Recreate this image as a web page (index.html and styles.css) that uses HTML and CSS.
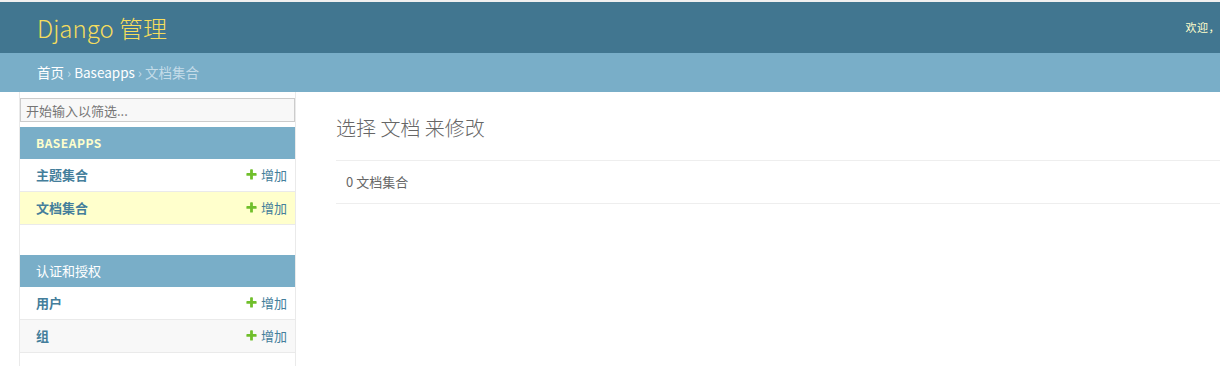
FILE: index.html
```html
<!DOCTYPE html>
<html lang="zh-hans">
<head>
    <meta charset="UTF-8">
    <meta name="viewport" content="width=device-width, initial-scale=1.0">
    <title>选择 文档 来修改 | Django 站点管理员</title>
    <link rel="stylesheet" href="styles.css">
</head>
<body>
    <div id="header">
        <div id="branding">
            <h1 id="site-name"><a href="#">Django 管理</a></h1>
        </div>
        <div id="user-tools">欢迎，</div>
    </div>

    <div class="breadcrumbs">
        <a href="#">首页</a> › <a href="#">Baseapps</a> › 文档集合
    </div>

    <div class="main">
        <button class="toggle-nav-sidebar" aria-label="切换导航"></button>

        <nav id="nav-sidebar">
            <input type="search" id="nav-filter" placeholder="开始输入以筛选...">

            <div class="module current-app">
                <table>
                    <caption><a href="#" class="section">Baseapps</a></caption>
                    <tr>
                        <th><a href="#">主题集合</a></th>
                        <td><a href="#" class="addlink"><svg viewBox="0 0 1792 1792"><path fill="#70bf2b" d="M1600 796v192q0 40-28 68t-68 28h-416v416q0 40-28 68t-68 28h-192q-40 0-68-28t-28-68v-416h-416q-40 0-68-28t-28-68v-192q0-40 28-68t68-28h416v-416q0-40 28-68t68-28h192q40 0 68 28t28 68v416h416q40 0 68 28t28 68z"/></svg>增加</a></td>
                    </tr>
                    <tr class="current-model">
                        <th><a href="#">文档集合</a></th>
                        <td><a href="#" class="addlink"><svg viewBox="0 0 1792 1792"><path fill="#70bf2b" d="M1600 796v192q0 40-28 68t-68 28h-416v416q0 40-28 68t-68 28h-192q-40 0-68-28t-28-68v-416h-416q-40 0-68-28t-28-68v-192q0-40 28-68t68-28h416v-416q0-40 28-68t68-28h192q40 0 68 28t28 68v416h416q40 0 68 28t28 68z"/></svg>增加</a></td>
                    </tr>
                </table>
            </div>

            <div class="module">
                <table>
                    <caption><a href="#" class="section">认证和授权</a></caption>
                    <tr>
                        <th><a href="#">用户</a></th>
                        <td><a href="#" class="addlink"><svg viewBox="0 0 1792 1792"><path fill="#70bf2b" d="M1600 796v192q0 40-28 68t-68 28h-416v416q0 40-28 68t-68 28h-192q-40 0-68-28t-28-68v-416h-416q-40 0-68-28t-28-68v-192q0-40 28-68t68-28h416v-416q0-40 28-68t68-28h192q40 0 68 28t28 68v416h416q40 0 68 28t28 68z"/></svg>增加</a></td>
                    </tr>
                    <tr>
                        <th><a href="#">组</a></th>
                        <td><a href="#" class="addlink"><svg viewBox="0 0 1792 1792"><path fill="#70bf2b" d="M1600 796v192q0 40-28 68t-68 28h-416v416q0 40-28 68t-68 28h-192q-40 0-68-28t-28-68v-416h-416q-40 0-68-28t-28-68v-192q0-40 28-68t68-28h416v-416q0-40 28-68t68-28h192q40 0 68 28t28 68v416h416q40 0 68 28t28 68z"/></svg>增加</a></td>
                    </tr>
                </table>
            </div>
        </nav>

        <div id="content">
            <h1>选择 文档 来修改</h1>
            <div id="changelist">
                <p class="paginator">0 文档集合</p>
            </div>
        </div>
    </div>
</body>
</html>
```

FILE: styles.css
```css
html {
    overflow: hidden;
}

body {
    margin: 0;
    padding: 0;
    font-family: "Noto Sans CJK SC", "Noto Sans", sans-serif;
    font-size: 14px;
    color: #333;
    background: #fff;
}

a {
    color: #447e9b;
    text-decoration: none;
}

/* header */

#header {
    display: flex;
    align-items: center;
    justify-content: space-between;
    height: 51px;
    padding: 0 0 0 37px;
    background: #417690;
    border-top: 2px solid #f0f0f0;
    color: #ffc;
    white-space: nowrap;
}

#site-name {
    margin: 0;
    font-size: 24px;
    font-weight: 300;
    line-height: 30px;
}

#site-name a {
    color: #f5dd5d;
}

#user-tools {
    font-size: 11px;
    letter-spacing: 0.5px;
    line-height: 14px;
    margin-top: -1px;
}

.breadcrumbs {
    padding: 10px 37px;
    height: 19px;
    line-height: 19px;
    font-size: 13.5px;
    background: #79aec8;
    color: #c4dce8;
}

.breadcrumbs a {
    color: #fff;
}

/* layout */

.main {
    display: flex;
    min-height: calc(100vh - 92px);
}

.toggle-nav-sidebar {
    box-sizing: border-box;
    flex: 0 0 20px;
    padding: 0;
    border: 0;
    border-right: 1px solid #eaeaea;
    background: #fff;
}

#nav-sidebar {
    flex: 0 0 275px;
    border-right: 1px solid #eaeaea;
}

#nav-filter {
    display: block;
    box-sizing: border-box;
    width: 100%;
    height: 24px;
    margin: 6px 0 5px;
    padding: 2px 5px;
    border: 1px solid #ccc;
    border-radius: 0;
    background: #f8f8f8;
    font-family: inherit;
    font-size: 13px;
    color: #333;
    outline: none;
}

#nav-filter::placeholder {
    color: #757575;
}

.module {
    margin-bottom: 30px;
}

.module:last-child {
    margin-bottom: 0;
}

.module table {
    width: 100%;
    border-collapse: collapse;
}

.module caption {
    padding: 8px 8px 8px 16px;
    height: 16px;
    line-height: 16px;
    font-size: 13px;
    text-align: left;
    background: #79aec8;
}

.module caption a {
    color: #fff;
}

.current-app caption a {
    color: #ffc;
    font-weight: bold;
    text-transform: uppercase;
    letter-spacing: 0.5px;
    font-size: 12px;
}

.module th,
.module td {
    padding: 8px;
    height: 16px;
    line-height: 16px;
    font-size: 13px;
    border-bottom: 1px solid #eaeaea;
}

.module th a,
.module td a {
    display: inline-block;
    line-height: 16px;
    vertical-align: top;
}

.module th {
    padding-left: 16px;
    text-align: left;
    font-weight: 600;
}

.module td {
    text-align: right;
}

.module tr:nth-child(even) {
    background: #f8f8f8;
}

.module tr.current-model {
    background: #ffc;
}

.addlink {
    white-space: nowrap;
}

.addlink svg {
    width: 13px;
    height: 13px;
    margin-right: 3px;
    vertical-align: -1px;
}

/* content */

#content {
    flex: 1;
    padding: 20px 0 20px 40px;
}

#content h1 {
    margin: 0 0 16px;
    font-size: 20px;
    font-weight: 300;
    line-height: 32px;
    color: #666;
}

.paginator {
    margin: 0;
    padding: 10px;
    line-height: 22px;
    font-size: 13px;
    color: #666;
    border-top: 1px solid #eee;
    border-bottom: 1px solid #eee;
}
```
